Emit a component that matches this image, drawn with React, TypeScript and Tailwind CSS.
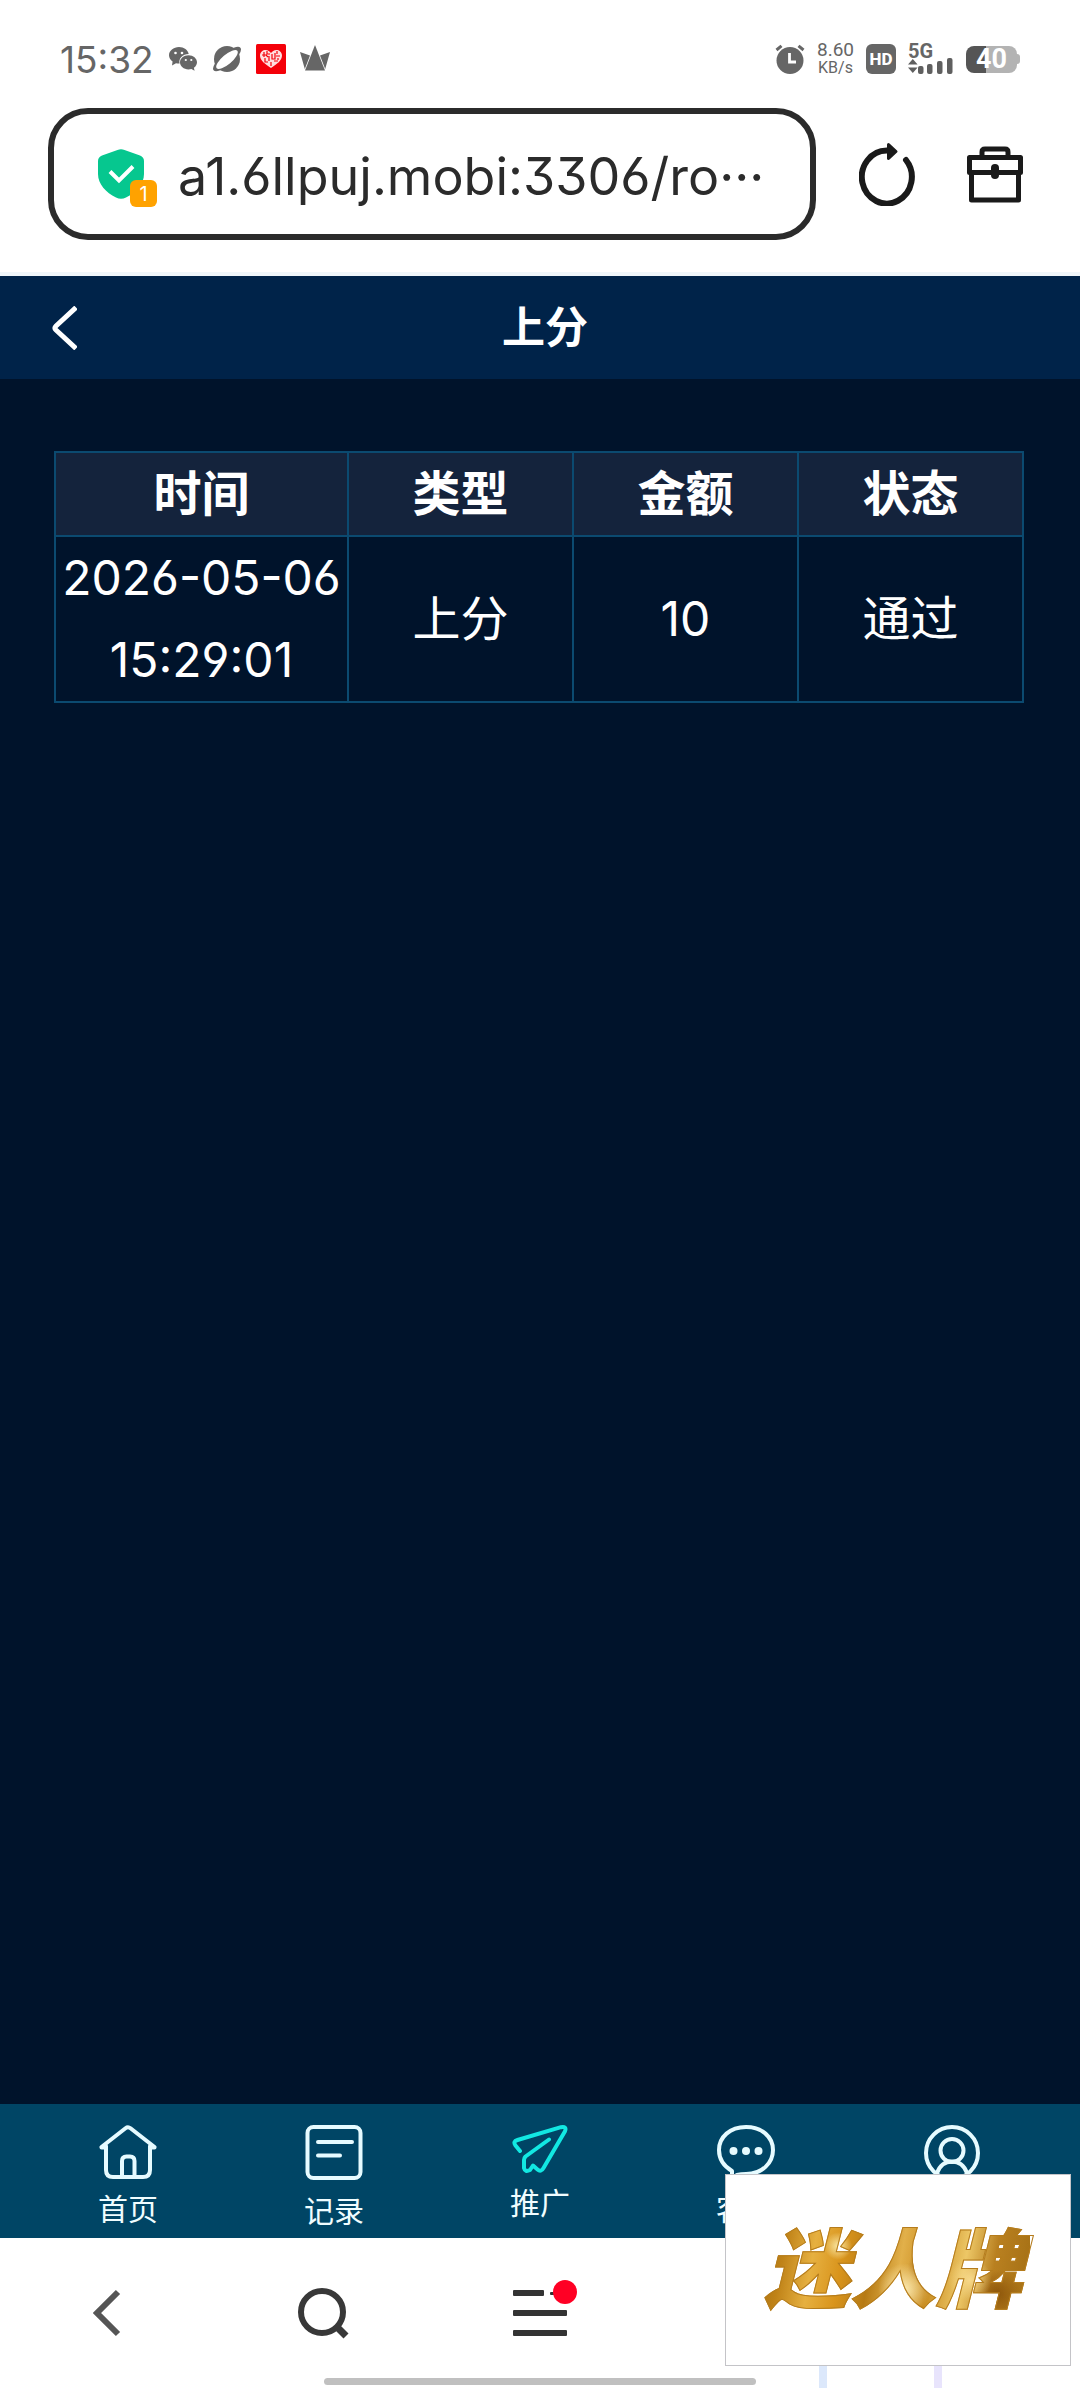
import type { ReactNode } from 'react';

function WechatIcon() {
  return (
    <svg width="30" height="30" viewBox="0 0 30 30" aria-hidden="true">
      <path fill="#666" d="M11 3C5.500 3 1 6.700 1 11.300c0 2.500 1.400 4.800 3.600 6.300L4 21.500l4-2.300c1 .3 2 .4 3 .4h.6c-1.300-5.200 3-9.700 9.100-9.700C20 6 16 3 11 3z" />
      <path fill="#666" d="M20.500 11.200c-4.800 0-8.500 3.200-8.500 7.100s3.700 7.100 8.500 7.100c1 0 2-.2 2.900-.4l3.200 1.800-.7-3c1.900-1.300 3.100-3.300 3.100-5.500 0-3.900-3.700-7.100-8.500-7.100z" />
      <g fill="#fff"><circle cx="7.500" cy="9" r="1.300" /><circle cx="14" cy="9" r="1.300" /><circle cx="17.800" cy="16" r="1.100" /><circle cx="23.300" cy="16" r="1.100" /></g>
    </svg>
  );
}

function PlanetIcon() {
  return (
    <svg width="30" height="30" viewBox="0 0 30 30" aria-hidden="true">
      <circle cx="15" cy="15" r="13" fill="#666" />
      <ellipse cx="15" cy="15" rx="17.500" ry="6" transform="rotate(-40 15 15)" fill="#666" />
      <ellipse cx="15" cy="15.500" rx="13.500" ry="4.800" transform="rotate(-40 15 15.500)" fill="#fff" />
    </svg>
  );
}

function HeartBadgeIcon() {
  return (
    <svg width="30" height="30" viewBox="0 0 30 30" aria-hidden="true">
      <rect width="30" height="30" rx="1.500" fill="#f40009" />
      <path d="M15 24C9 20 4 16.500 4 11.500 4 8 7 6 9.500 6s4.500 1.500 5.500 3c1-1.500 3-3 5.500-3S26 8 26 11.500C26 16.500 21 20 15 24z" fill="#ffdede" />
      <path d="M8 8v5M6 11h5M11 7v3h3M13 12v5M9 14v4h3M16 10v5h3V9M20 12h4M21 7v3M18 17h4M15 18v4M22 14v2M10 11l2 2" fill="none" stroke="#f40009" strokeWidth="1.200" />
    </svg>
  );
}

function CrownIcon() {
  return (
    <svg width="30" height="30" viewBox="0 0 30 30" aria-hidden="true" fill="#666">
      <path d="M15 1L5 26.500h20z" />
      <path d="M0 8l10 3.500L4.800 25zM30 8l-10 3.500L25.200 25z" />
    </svg>
  );
}

function AlarmIcon() {
  return (
    <svg width="30" height="30" viewBox="0 0 30 30" aria-hidden="true">
      <circle cx="15" cy="16.500" r="13.500" fill="#666" />
      <path d="M1.500 6L6.500 1.800M28.500 6l-5-4.200" stroke="#666" strokeWidth="3" />
      <path d="M14.500 9v9H21" fill="none" stroke="#fff" strokeWidth="2.800" />
    </svg>
  );
}

function SignalIcon() {
  return (
    <svg className="block" width="46" height="16" viewBox="0 0 46 16" aria-hidden="true" fill="#5f5f5f">
      <path d="M0 6.500L4.800 1l4.800 5.500zM0 9.500L4.800 15l4.800-5.500z" />
      <rect x="10" y="8" width="5.500" height="8" rx="2" />
      <rect x="19" y="6" width="5.500" height="10" rx="2" />
      <rect x="29" y="3" width="5.500" height="13" rx="2" />
      <rect x="39" y="0" width="5.500" height="16" rx="2" />
    </svg>
  );
}

function ShieldIcon() {
  return (
    <svg width="46" height="50" viewBox="0 0 46 50" aria-hidden="true">
      <path fill="#06c78f" d="M19.500 1q3.500-1.500 7 0L42 6.500q4 1.600 4 5.500v13c0 10-8 18.500-18 23.500q-5 2.500-10 0C8 43.500 0 35 0 25V12q0-3.900 4-5.500z" />
      <path d="M12 22.500l9 9L35 17.500" fill="none" stroke="#fff" strokeWidth="4" />
    </svg>
  );
}

function RefreshIcon() {
  return (
    <svg width="56" height="64" viewBox="0 0 56 64" aria-hidden="true">
      <path d="M28 8.500A25 26.500 0 1 0 47 18" fill="none" stroke="#1a1a1a" strokeWidth="6" strokeLinecap="round" />
      <path d="M29.500 2.500L37 9.500 29.500 16.500z" fill="#1a1a1a" stroke="#1a1a1a" strokeWidth="3" strokeLinejoin="round" />
    </svg>
  );
}

function ToolboxIcon() {
  return (
    <svg width="58" height="58" viewBox="0 0 58 58" aria-hidden="true" fill="none" stroke="#1a1a1a" strokeWidth="5" strokeLinejoin="round">
      <path d="M3.500 12.500h51v15h-51zM5.500 27.500v27.500h47V27.500M16 12V7q0-3 3-3h20q3 0 3 3v5" />
      <path d="M29 23v7" strokeWidth="8" strokeLinecap="round" />
    </svg>
  );
}

const line = { fill: 'none', stroke: '#e6fbff', strokeWidth: 4, strokeLinejoin: 'round', strokeLinecap: 'round' } as const;

function HomeIcon() {
  return (
    <svg width="58" height="54" viewBox="0 0 58 54" aria-hidden="true" {...line}>
      <path d="M2.500 22.500H7M51 22.500h4.500M2.500 22L26.500 3.200q2.500-2 5 0L55.500 22M7 21v24q0 7 7 7h30q7 0 7-7V21M23 51V36q0-4.500 4.500-4.500h3.500q4.500 0 4.500 4.500v15" />
    </svg>
  );
}

function RecordIcon() {
  return (
    <svg width="58" height="56" viewBox="0 0 58 56" aria-hidden="true" {...line}>
      <rect x="2.500" y="2" width="53" height="51" rx="6" />
      <path d="M13 17h34M13 30.500h22" />
    </svg>
  );
}

function PlaneIcon() {
  return (
    <svg width="56" height="48" viewBox="0 0 56 48" aria-hidden="true" {...line} stroke="#12e8e2">
      <path d="M8 26l-4.500-5.500q-3-4 2-5.500L49 2.200q6-1 4 4L31.500 43q-2.500 4.500-6 1.500l-4.500-4-3 4.500q-5 2.500-6-2V35q0-2 1.500-3.500L37 14.500" />
    </svg>
  );
}

function ChatIcon() {
  return (
    <svg width="58" height="54" viewBox="0 0 58 54" aria-hidden="true" {...line}>
      <path d="M15 46C6.500 41 2 33.500 2 25 2 12 13 2 29 2s27 10 27 23-11 24-27 24q-5 0-9 1l-5 3z" />
      <g fill="#e6fbff" stroke="none"><circle cx="16.500" cy="26" r="4" /><circle cx="29" cy="26" r="4" /><circle cx="41.500" cy="26" r="4" /></g>
    </svg>
  );
}

function UserIcon() {
  return (
    <svg width="56" height="56" viewBox="0 0 56 56" aria-hidden="true" {...line}>
      <circle cx="28" cy="28" r="26" />
      <circle cx="28" cy="25.500" r="11.500" />
      <path d="M13 48c3-8 8-11.500 15-11.500S40 40 43 48" />
    </svg>
  );
}

const tabs: { name: string; label?: string; icon: ReactNode }[] = [
  { name: '首页', label: '首页', icon: <HomeIcon /> },
  { name: '记录', label: '记录', icon: <RecordIcon /> },
  { name: '推广', label: '推广', icon: <PlaneIcon /> },
  { name: '客服', label: '客服', icon: <ChatIcon /> },
  { name: '我的', icon: <UserIcon /> },
];

const columns = ['时间', '类型', '金额', '状态'];
const rows = [['2026-05-06 15:29:01', '上分', '10', '通过']];

function StatusBar() {
  return (
    <div className="flex h-[30px] items-center justify-between pr-[60px] pl-[60px] text-[#666]">
      <div className="flex items-center gap-[14px]">
        <time className="text-[37px] leading-none">15:32</time>
        <WechatIcon />
        <PlanetIcon />
        <HeartBadgeIcon />
        <CrownIcon />
      </div>
      <div className="flex items-center gap-3 font-[Roboto,sans-serif]">
        <AlarmIcon />
        <div className="text-center text-[19px] leading-[18px]">
          <div>8.60</div>
          <div className="text-[16px]">KB/s</div>
        </div>
        <div className="flex h-[30px] w-[30px] items-center justify-center rounded-md bg-[#666] text-[17px] leading-none font-extrabold text-white">HD</div>
        <div>
          <div className="text-[20px] leading-[14px] font-bold">5G</div>
          <SignalIcon />
        </div>
        <div className="flex items-center">
          <div className="flex h-[27px] w-[51px] items-center justify-center rounded-lg bg-linear-to-r from-[#555] from-40% to-[#b3b3b3] to-40% text-[27px] leading-none font-bold text-white">40</div>
          <div className="h-2.5 w-[3px] rounded-r bg-[#b3b3b3]" />
        </div>
      </div>
    </div>
  );
}

function AddressBar() {
  return (
    <div className="mt-[34px] flex items-center pr-14 pl-12">
      <div className="flex h-[132px] min-w-0 flex-1 items-center rounded-[40px] border-6 border-[#2b2b2b] pl-11">
        <div className="relative shrink-0">
          <ShieldIcon />
          <span className="absolute top-[31px] left-8 flex h-[27px] w-[27px] items-center justify-center rounded-md bg-[#ffa200] text-[20px] leading-none text-white">1</span>
        </div>
        <input
          aria-label="网址"
          readOnly
          value="a1.6llpuj.mobi:3306/ro···"
          className="ml-[34px] h-[72px] min-w-0 flex-1 bg-transparent pt-1.5 text-[52px] text-[#2b2b2b] outline-none [font-feature-settings:'ss01']"
        />
      </div>
      <button type="button" aria-label="刷新" className="ml-[43px]"><RefreshIcon /></button>
      <button type="button" aria-label="工具箱" className="ml-[51px]"><ToolboxIcon /></button>
    </div>
  );
}

export default function App() {
  return (
    <div className="relative flex min-h-screen flex-col bg-[#00132b] font-[Inter,'Noto_Sans_CJK_SC',sans-serif]">
      <div className="border-b-4 border-[#f0f6fa] bg-white pt-11 pb-8">
        <StatusBar />
        <AddressBar />
      </div>

      <header className="grid h-[103px] grid-cols-[1fr_auto_1fr] items-center bg-[#002349] text-white">
        <button type="button" aria-label="返回" className="justify-self-start pl-[51px]">
          <svg width="26" height="44" viewBox="0 0 26 44" aria-hidden="true">
            <path d="M25 1.500L5 20q-2 2 0 4l20 18.500" fill="none" stroke="#fff" strokeWidth="5" />
          </svg>
        </button>
        <h1 className="pl-2.5 text-[43px] leading-none font-bold">上分</h1>
      </header>

      <main className="flex-1 pt-[72px] pr-14 pl-[54px]">
        <table className="w-full table-fixed border-collapse text-center text-[48px] leading-[82px] text-white [font-feature-settings:'ss01']">
          <thead>
            <tr className="bg-[#14233c]">
              {columns.map((c) => (
                <th key={c} className="border-2 border-[#0b4a70] font-bold first:w-[293px]">{c}</th>
              ))}
            </tr>
          </thead>
          <tbody>
            {rows.map((r) => (
              <tr key={r[0]}>
                {r.map((v) => (
                  <td key={v} className="border-2 border-[#0b4a70]">{v}</td>
                ))}
              </tr>
            ))}
          </tbody>
        </table>
      </main>

      <nav aria-label="主导航" className="grid h-[134px] grid-cols-5 bg-[#004565] px-[25px] pt-[21px]">
        {tabs.map((t) => (
          <a key={t.name} href="#" aria-label={t.name} className="flex flex-col items-center gap-2.5 text-[30px] leading-10 text-[#f0fdff]">
            {t.icon}
            {t.label && <span>{t.label}</span>}
          </a>
        ))}
      </nav>

      <footer className="bg-white pb-[3px]">
        <div className="grid h-[140px] grid-cols-5 place-items-center pt-2.5">
          <button type="button" aria-label="后退">
            <svg width="30" height="48" viewBox="0 0 30 48" aria-hidden="true">
              <path d="M25 3L4 24l21 21" fill="none" stroke="#555" strokeWidth="6" />
            </svg>
          </button>
          <button type="button" aria-label="搜索">
            <svg width="52" height="52" viewBox="0 0 52 52" aria-hidden="true" fill="none" stroke="#383838" strokeWidth="6">
              <circle cx="24" cy="25" r="21" />
              <path d="M38 39l10 10" strokeWidth="7" />
            </svg>
          </button>
          <button type="button" aria-label="菜单">
            <svg className="overflow-visible" width="54" height="46" viewBox="0 0 54 46" aria-hidden="true" fill="#333">
              <rect y="0" width="31" height="6" rx="1" />
              <rect x="37" y="2" width="8" height="3" rx="1" />
              <rect y="20" width="54" height="6" rx="1" />
              <rect y="40" width="54" height="6" rx="1" />
              <circle cx="52" cy="2" r="12" fill="#ff0024" />
            </svg>
          </button>
        </div>
        <div className="mx-auto h-[7px] w-2/5 rounded-full bg-[#c0c0c0]" />
      </footer>

      <aside className="absolute right-[9px] bottom-0 w-[346px]">
        <div className="flex h-48 items-center justify-center border border-[#c4c4c8] bg-white pr-2.5">
          <span className="bg-[radial-gradient(circle_at_30%_30%,#fae7a4_0,transparent_14px),radial-gradient(circle_at_54%_66%,#fbe9b0_0,transparent_26px),radial-gradient(circle_at_78%_58%,#f6d88a_0,transparent_22px),radial-gradient(circle_at_62%_48%,#9a5c0c_0,transparent_18px),radial-gradient(circle_at_88%_70%,#8d560b_0,transparent_24px),linear-gradient(100deg,#9c640a_0%,#c08318_12%,#e6b040_22%,#d9941c_32%,#b67a14_42%,#e2b04a_52%,#c78a1e_62%,#edc766_74%,#b98020_84%,#a06c12_100%)] bg-clip-text px-2 text-[86px] leading-[120px] font-black text-transparent italic [-webkit-text-stroke:1px_#b57c1c]">迷人牌</span>
        </div>
        <div className="flex h-[22px] gap-[107px] pl-[94px]">
          <div className="w-2 bg-[#dce8fb]" />
          <div className="w-2 bg-[#e8e4fc]" />
        </div>
      </aside>
    </div>
  );
}
